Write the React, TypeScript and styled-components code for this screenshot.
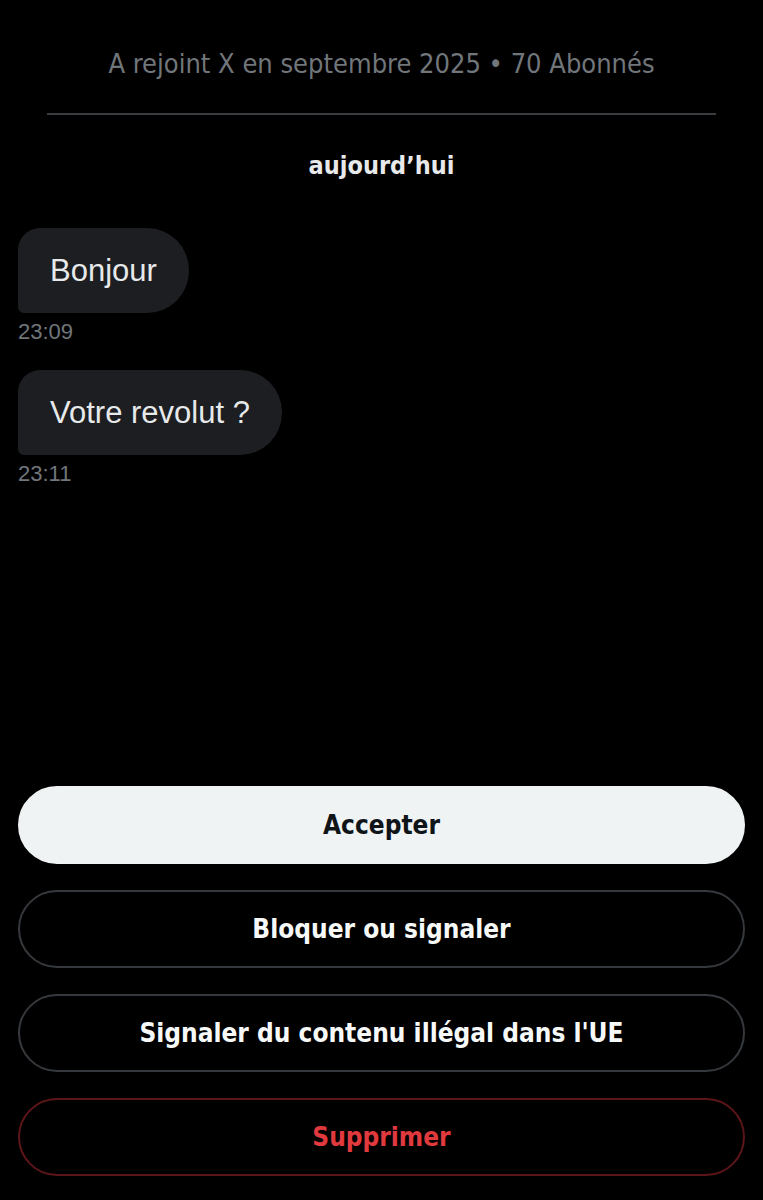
import styled, { createGlobalStyle } from 'styled-components';

const GlobalStyle = createGlobalStyle`
  html, body {
    margin: 0;
    padding: 0;
    background: #000;
  }
`;

const narrow = `"DejaVu Sans Condensed", "Roboto", sans-serif`;

type Message = { text: string; time: string };

const messages: Message[] = [
  { text: 'Bonjour', time: '23:09' },
  { text: 'Votre revolut ?', time: '23:11' },
];

type Variant = 'primary' | 'outline' | 'danger';

const actions: { label: string; variant: Variant }[] = [
  { label: 'Accepter', variant: 'primary' },
  { label: 'Bloquer ou signaler', variant: 'outline' },
  { label: "Signaler du contenu illégal dans l'UE", variant: 'outline' },
  { label: 'Supprimer', variant: 'danger' },
];

export default function App() {
  return (
    <>
      <GlobalStyle />
      <Page>
        <Header>
          <JoinedText>A rejoint X en septembre 2025 • 70 Abonnés</JoinedText>
          <Divider />
          <DayLabel>aujourd’hui</DayLabel>
        </Header>

        <MessageList>
          {messages.map((m) => (
            <MessageItem key={m.time}>
              <Bubble>{m.text}</Bubble>
              <Time>{m.time}</Time>
            </MessageItem>
          ))}
        </MessageList>

        <Actions>
          {actions.map((a) => (
            <ActionButton key={a.label} $variant={a.variant}>
              {a.label}
            </ActionButton>
          ))}
        </Actions>
      </Page>
    </>
  );
}

const Page = styled.div`
  min-height: 1200px;
  box-sizing: border-box;
  background: #000;
  padding: 0 18px 24px;
  display: flex;
  flex-direction: column;
`;

const Header = styled.div`
  display: flex;
  flex-direction: column;
  align-items: center;
  padding-top: 47px;
`;

const JoinedText = styled.div`
  font-family: ${narrow};
  font-size: 27px;
  line-height: 34px;
  color: #71767b;
`;

const Divider = styled.div`
  align-self: stretch;
  height: 2px;
  margin: 32px 29px 0;
  background: #3a3d40;
`;

const DayLabel = styled.div`
  margin-top: 36px;
  font-family: ${narrow};
  font-weight: 700;
  font-size: 25px;
  line-height: 30px;
  color: #e7e9ea;
`;

const MessageList = styled.div`
  display: flex;
  flex-direction: column;
  gap: 25px;
  margin-top: 47px;
`;

const MessageItem = styled.div`
  display: flex;
  flex-direction: column;
  align-items: flex-start;
`;

const Bubble = styled.div`
  height: 85px;
  box-sizing: border-box;
  display: flex;
  align-items: center;
  padding: 0 32px;
  background: #1c1e21;
  border-radius: 22px 42px 42px 6px;
  font-family: "Liberation Sans", Arial, sans-serif;
  font-size: 31px;
  color: #e7e9ea;
`;

const Time = styled.div`
  margin-top: 6px;
  font-family: "Liberation Sans", Arial, sans-serif;
  font-size: 22px;
  line-height: 26px;
  color: #71767b;
`;

const Actions = styled.div`
  margin-top: auto;
  display: flex;
  flex-direction: column;
  gap: 26px;
`;

const ActionButton = styled.button<{ $variant: Variant }>`
  height: 78px;
  width: 100%;
  border-radius: 39px;
  box-sizing: border-box;
  font-family: ${narrow};
  font-weight: 700;
  font-size: 26px;
  cursor: pointer;
  background: ${({ $variant }) => ($variant === 'primary' ? '#eff3f4' : '#000')};
  color: ${({ $variant }) =>
    $variant === 'primary' ? '#0f1419' : $variant === 'danger' ? '#e0393e' : '#f7f9f9'};
  border: 2px solid
    ${({ $variant }) =>
      $variant === 'primary' ? '#eff3f4' : $variant === 'danger' ? '#5c1519' : '#35383c'};
`;
